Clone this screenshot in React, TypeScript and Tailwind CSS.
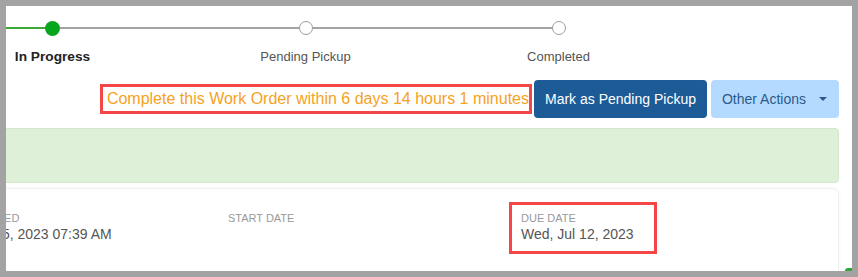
const steps = [
  { label: 'In Progress', state: 'done' },
  { label: 'Pending Pickup', state: 'todo' },
  { label: 'Completed', state: 'todo' },
];

const dates = [
  { label: 'Date Created', value: 'Wed, Jul 05, 2023 07:39 AM', w: 'w-[292px]' },
  { label: 'Start Date', value: '', w: 'w-[293px]' },
  { label: 'Due Date', value: 'Wed, Jul 12, 2023', w: 'w-[148px]', marked: true },
];

function Stepper() {
  return (
    <div className="flex -ml-[80px] pt-[15px]">
      {steps.map((s, i) => (
        <div key={s.label} className="w-[253px] flex flex-col items-center">
          <div className="flex items-center w-full h-[14px]">
            <div
              className={
                'flex-1 h-[2px] ' +
                (i === 0 ? 'bg-[#3aa935]' : 'bg-[#a3a3a3]')
              }
            />
            {s.state === 'done' ? (
              <div className="w-[15px] h-[15px] rounded-full bg-[#07a61c]" />
            ) : (
              <div className="w-[14px] h-[14px] rounded-full bg-white border-[1.5px] border-[#9c9c9c]" />
            )}
            <div
              className={
                'flex-1 h-[2px] ' + (i === 2 ? 'bg-transparent' : 'bg-[#a3a3a3]')
              }
            />
          </div>
          <div
            className={
              'mt-[13px] leading-[18px] ' +
              (s.state === 'done'
                ? 'text-[13.7px] font-bold text-[#222]'
                : 'text-[13px] text-[#555]')
            }
          >
            {s.label}
          </div>
        </div>
      ))}
    </div>
  );
}

export default function App() {
  return (
    <div className="w-[858px] h-[277px] bg-[#a3a3a3] p-[6px] font-['Liberation_Sans',Arial,sans-serif]">
      <div className="relative h-[265px] bg-white overflow-hidden">
        <Stepper />

        <div className="flex justify-end items-center mt-[14px] pr-[13px]">
          <div className="h-[30px] flex items-center border-[3px] border-[#f44646] pl-[4px] mr-[2px] text-[16px] text-[#f5a21e] whitespace-nowrap">
            Complete this Work Order within 6 days 14 hours 1 minutes
          </div>
          <button className="h-[38px] px-[11px] rounded-[4px] bg-[#1d5b97] text-white text-[14px] whitespace-nowrap">
            Mark as Pending Pickup
          </button>
          <button className="h-[38px] ml-[4px] pl-[11px] pr-[12px] rounded-[4px] bg-[#b5daff] text-[#2c5a8a] text-[14px] flex items-center whitespace-nowrap">
            Other Actions
            <span className="ml-[13px] w-0 h-0 border-l-[4px] border-r-[4px] border-t-[4px] border-l-transparent border-r-transparent border-t-[#2c5a8a]" />
          </button>
        </div>

        <div className="mt-[10px] -ml-[10px] mr-[13px] h-[55px] bg-[#dff0d8] border border-[#d3e8c8] rounded-[4px]" />

        <div className="mt-[5px] -ml-[100px] mr-[13px] h-[120px] border border-[#f0f0f0] rounded-[6px] shadow-[0_0_4px_rgba(0,0,0,0.04)] pl-[17px] pt-[13px] flex items-start">
          {dates.map((d) => (
            <div key={d.label} className={d.w}>
              <div
                className={
                  'w-[148px] border-[3px] pl-[9px] pt-[6px] pb-[7px] ' +
                  (d.marked ? 'border-[#f44646]' : 'border-transparent')
                }
              >
                <div className="text-[11px] leading-[14px] uppercase text-[#999] whitespace-nowrap">
                  {d.label}
                </div>
                <div className="text-[14px] leading-[19px] text-[#555] whitespace-nowrap">
                  {d.value || '\u00a0'}
                </div>
              </div>
            </div>
          ))}
        </div>

        <div className="absolute right-0 bottom-0 w-[7px] h-[3px] rounded-tl-[3px] bg-[#2ea836]" />
      </div>
    </div>
  );
}
